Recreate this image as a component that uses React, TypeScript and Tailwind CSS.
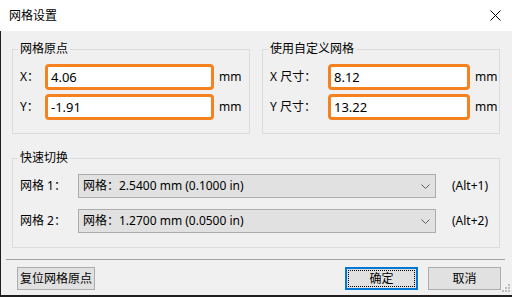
import React from "react";

function GridInput({ value, width }: { value: string; width: string }) {
  return (
    <div
      className={`${width} h-[26px] bg-white border-[3px] border-[#f5821f] rounded-[4px] flex items-center px-[3px] text-[13px]`}
    >
      {value}
    </div>
  );
}

function GridSelect({ text }: { text: string }) {
  return (
    <div className="w-[358px] h-[24px] bg-[#e1e1e1] border border-[#adadad] flex items-center justify-between pl-[4px] pr-[5px]">
      <span>{text}</span>
      <svg width="9" height="5" viewBox="0 0 9 5">
        <path d="M0.5 0.5 L4.5 4.5 L8.5 0.5" fill="none" stroke="#606060" strokeWidth="1" />
      </svg>
    </div>
  );
}

function Grip() {
  const dots = [
    [6, 0],
    [3, 3],
    [6, 3],
    [0, 6],
    [3, 6],
    [6, 6],
  ];
  return (
    <svg className="absolute right-[2px] bottom-[3px]" width="8" height="8" viewBox="0 0 8 8">
      {dots.map(([x, y], i) => (
        <rect key={i} x={x} y={y} width="2" height="2" fill="#bdbdbd" />
      ))}
    </svg>
  );
}

export default function App() {
  return (
    <div className="relative w-[512px] h-[297px] flex flex-col bg-[#f0f0f0] text-black text-[12px] leading-[16px] font-['Noto_Sans','Noto_Sans_CJK_SC',sans-serif] border-b-2 border-[#1f1f1f] overflow-hidden">
      {/* title bar */}
      <div className="h-[31px] shrink-0 bg-white flex items-center justify-between pl-[9px] pr-[11px]">
        <span>网格设置</span>
        <svg width="11" height="11" viewBox="0 0 11 11">
          <path d="M0.5 0.5 L10.5 10.5 M10.5 0.5 L0.5 10.5" stroke="#000" strokeWidth="1" />
        </svg>
      </div>

      <div className="flex-1 flex flex-col pt-[10px] pl-[11px] pr-[12px] border-l border-[#1f1f1f]">
        <div className="flex gap-[12px]">
          <fieldset className="w-[238px] h-[93px] border border-[#dcdcdc] pl-[5px]">
            <legend className="px-[2px]">网格原点</legend>
            <div className="pl-[2px] pt-[7px] flex flex-col gap-[4px]">
              <div className="flex items-center">
                <span className="w-[25px]">X：</span>
                <GridInput value="4.06" width="w-[169px]" />
                <span className="ml-[5px]">mm</span>
              </div>
              <div className="flex items-center">
                <span className="w-[25px]">Y：</span>
                <GridInput value="-1.91" width="w-[169px]" />
                <span className="ml-[5px]">mm</span>
              </div>
            </div>
          </fieldset>

          <fieldset className="w-[238px] h-[93px] border border-[#dcdcdc] pl-[5px]">
            <legend className="px-[2px]">使用自定义网格</legend>
            <div className="pl-[2px] pt-[7px] flex flex-col gap-[4px]">
              <div className="flex items-center">
                <span className="w-[58px]">X 尺寸：</span>
                <GridInput value="8.12" width="w-[142px]" />
                <span className="ml-[5px]">mm</span>
              </div>
              <div className="flex items-center">
                <span className="w-[58px]">Y 尺寸：</span>
                <GridInput value="13.22" width="w-[142px]" />
                <span className="ml-[5px]">mm</span>
              </div>
            </div>
          </fieldset>
        </div>

        <fieldset className="mt-[16px] w-[488px] h-[98px] border border-[#dcdcdc] pl-[5px]">
          <legend className="px-[2px]">快速切换</legend>
          <div className="pl-[2px] pt-[8px] flex flex-col gap-[11px]">
            <div className="flex items-center">
              <span className="w-[58px]">网格 1：</span>
              <GridSelect text="网格：2.5400 mm (0.1000 in)" />
              <span className="ml-[16px]">(Alt+1)</span>
            </div>
            <div className="flex items-center">
              <span className="w-[58px]">网格 2：</span>
              <GridSelect text="网格：1.2700 mm (0.0500 in)" />
              <span className="ml-[16px]">(Alt+2)</span>
            </div>
          </div>
        </fieldset>

        <div className="mt-[11px] h-px bg-[#a0a0a0] -ml-[6px] -mr-[5px]" />

        <div className="mt-[7px] flex items-center">
          <button className="ml-[5px] w-[78px] h-[23px] bg-[#e1e1e1] border border-[#adadad] flex items-center justify-center">
            复位网格原点
          </button>
          <button className="relative ml-auto w-[73px] h-[23px] bg-[#e1e1e1] border-2 border-[#0078d7] flex items-center justify-center">
            <span className="absolute inset-[1px] border border-dotted border-black" />
            确定
          </button>
          <button className="ml-[10px] -mr-px w-[73px] h-[23px] bg-[#e1e1e1] border border-[#adadad] flex items-center justify-center">
            取消
          </button>
        </div>
      </div>
      <Grip />
    </div>
  );
}
